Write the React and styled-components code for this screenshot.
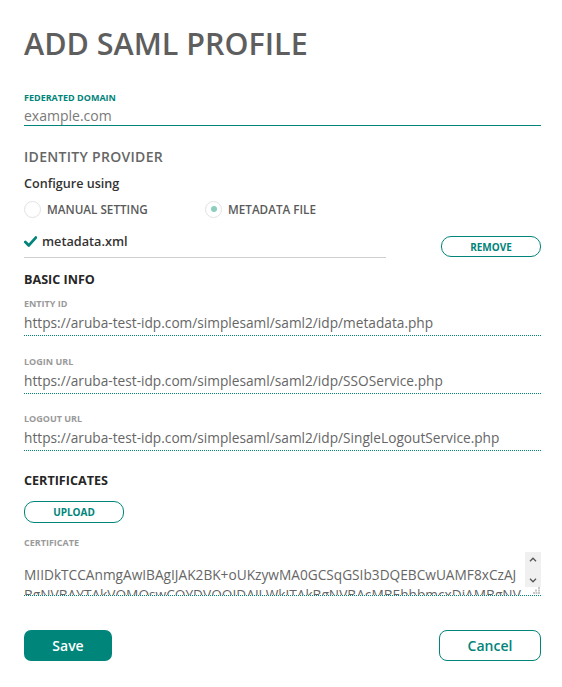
import React from "react";
import styled, { createGlobalStyle } from "styled-components";

const TEAL = "#01847a";

const Global = createGlobalStyle`
  html, body { margin: 0; padding: 0; background: #fff; }
  body { font-family: "Open Sans", "Noto Sans", sans-serif; }
  * { box-sizing: border-box; }
`;

const Page = styled.div`
  width: 562px;
  padding: 23px 21px 24px 24px;
  display: flex;
  flex-direction: column;
`;

const Title = styled.h1`
  margin: 0;
  font-size: 30.5px;
  line-height: 40px;
  font-weight: 600;
  color: #5e5e5e;
`;

const Field = styled.div`
  display: flex;
  flex-direction: column;
  margin-top: ${(p) => p.$mt || 0}px;
`;

const SmallLabel = styled.label`
  font-size: 9px;
  line-height: 12px;
  font-weight: 700;
  color: ${(p) => (p.$accent ? TEAL : "#9a9a9a")};
  text-transform: uppercase;
`;

const TextInput = styled.input`
  border: none;
  outline: none;
  font-family: inherit;
  font-size: 14px;
  line-height: 20px;
  height: 22px;
  padding: 1px 0 0 0;
  color: #7a7a7a;
  border-bottom: 1px solid ${TEAL};
  background: transparent;
`;

const SectionHead = styled.div`
  margin-top: ${(p) => p.$mt || 0}px;
  font-size: 14px;
  line-height: 18px;
  font-weight: 600;
  letter-spacing: 0.3px;
  color: #666;
`;

const GroupHead = styled.div`
  margin-top: ${(p) => p.$mt || 0}px;
  font-size: 12.6px;
  line-height: 18px;
  font-weight: 700;
  color: #262626;
`;

const SubHead = styled.div`
  margin-top: ${(p) => p.$mt || 0}px;
  font-size: 12.6px;
  line-height: 18px;
  font-weight: 600;
  color: #333;
`;

const RadioRow = styled.div`
  display: flex;
  align-items: center;
  margin-top: 7px;
  height: 18px;
`;

const RadioOption = styled.label`
  display: flex;
  align-items: center;
  gap: 6px;
  width: ${(p) => p.$w}px;
  font-size: 11.7px;
  font-weight: 600;
  color: #5a5a5a;
`;

const RadioCircle = styled.span`
  width: 17px;
  height: 17px;
  border-radius: 50%;
  border: 1px solid #e2e2e2;
  background: #fff;
  display: flex;
  align-items: center;
  justify-content: center;
  &::after {
    content: "";
    width: 6px;
    height: 6px;
    border-radius: 50%;
    background: #8ccfbf;
    display: ${(p) => (p.$checked ? "block" : "none")};
  }
`;

const FileRow = styled.div`
  display: flex;
  align-items: flex-end;
  justify-content: space-between;
  margin-top: 13px;
`;

const FileName = styled.div`
  width: 362px;
  height: 27px;
  display: flex;
  align-items: center;
  gap: 5px;
  border-bottom: 1px solid #cfcfcf;
  font-size: 12.7px;
  font-weight: 600;
  color: #333;
  padding-bottom: 6px;
`;

const OutlineBtn = styled.button`
  width: ${(p) => p.$w}px;
  height: ${(p) => p.$h}px;
  margin-top: ${(p) => p.$mt || 0}px;
  margin-bottom: ${(p) => p.$mb || 0}px;
  border: 1px solid ${TEAL};
  border-radius: 10px;
  background: #fff;
  color: ${TEAL};
  font-family: inherit;
  font-size: 10px;
  font-weight: 700;
  padding: 0;
  cursor: pointer;
`;

const ReadValue = styled.div`
  font-size: 13.7px;
  line-height: 20px;
  color: #666;
  padding-top: 3px;
  padding-bottom: 2px;
  border-bottom: 1px dotted ${TEAL};
  white-space: nowrap;
  overflow: hidden;
`;

const CertBox = styled.div`
  margin-top: 3px;
  display: flex;
  height: 44px;
  border-bottom: 1px dotted ${TEAL};
`;

const CertArea = styled.textarea`
  flex: 1;
  min-width: 0;
  height: 100%;
  border: none;
  outline: none;
  resize: none;
  font-family: inherit;
  font-size: 13.7px;
  line-height: 20px;
  color: #666;
  padding: 13px 4px 0 0;
  overflow: hidden;
  word-break: break-all;
`;

const ScrollTrack = styled.div`
  width: 16px;
  display: flex;
  flex-direction: column;
`;

const ScrollBody = styled.div`
  height: 35px;
  background: #f0f0f0;
  display: flex;
  flex-direction: column;
  align-items: center;
  justify-content: space-between;
  padding: 5px 0 4px;
`;

const Resizer = styled.div`
  flex: 1;
  display: flex;
  justify-content: flex-end;
  align-items: flex-end;
  padding: 0 1px 1px 0;
`;

const Footer = styled.div`
  display: flex;
  justify-content: space-between;
  margin-top: 34px;
`;

const PrimaryBtn = styled.button`
  width: 88px;
  height: 31px;
  border: none;
  border-radius: 7px;
  background: #00857a;
  color: #fff;
  font-family: inherit;
  font-size: 14px;
  font-weight: 600;
`;

const SecondaryBtn = styled.button`
  width: 102px;
  height: 31px;
  border: 1px solid ${TEAL};
  border-radius: 8px;
  background: #fff;
  color: ${TEAL};
  font-family: inherit;
  font-size: 14px;
  font-weight: 600;
`;

const Check = () => (
  <svg width="13" height="11" viewBox="0 0 13 11">
    <path d="M1.4 6 L4.8 9.4 L11.8 1.6" fill="none" stroke={TEAL} strokeWidth="2.8" strokeLinecap="round" strokeLinejoin="round" />
  </svg>
);

const Chevron = ({ up }) => (
  <svg width="8" height="5" viewBox="0 0 8 5">
    <path d={up ? "M1 4.2 L4 1.2 L7 4.2" : "M1 0.8 L4 3.8 L7 0.8"} fill="none" stroke="#555" strokeWidth="1.3" />
  </svg>
);

const Grip = () => (
  <svg width="7" height="7" viewBox="0 0 7 7">
    <g fill="#c8c8c8">
      <rect x="5" y="0" width="2" height="2" />
      <rect x="2" y="2.5" width="2" height="2" />
      <rect x="5" y="2.5" width="2" height="2" />
      <rect x="0" y="5" width="2" height="2" />
      <rect x="2.5" y="5" width="2" height="2" />
      <rect x="5" y="5" width="2" height="2" />
    </g>
  </svg>
);

const CERT =
  "MIIDkTCCAnmgAwIBAgIJAK2BK+oUKzywMA0GCSqGSIb3DQEBCwUAMF8xCzAJBgNVBAYTAkVOMQswCQYDVQQIDAJLWkJTAkBgNVBAcMBEhhbmcxDjAMBgNVBAoMBUFydWJhMQ4wDAYDVQQLDAVBcnViYTETMBEGA1UEAwwKYXJ1YmEtdGVzdDAeFw0xODA1MDExMjAwMDBaFw0yODA1MDExMjAwMDBa";

export default function App() {
  return (
    <>
      <Global />
      <Page>
        <Title>ADD SAML PROFILE</Title>
        <Field $mt={29}>
          <SmallLabel $accent>Federated Domain</SmallLabel>
          <TextInput defaultValue="example.com" />
        </Field>
        <SectionHead $mt={22}>IDENTITY PROVIDER</SectionHead>
        <SubHead $mt={9}>Configure using</SubHead>
        <RadioRow>
          <RadioOption $w={181}>
            <RadioCircle />
            MANUAL SETTING
          </RadioOption>
          <RadioOption $w={160}>
            <RadioCircle $checked />
            METADATA FILE
          </RadioOption>
        </RadioRow>
        <FileRow>
          <FileName>
            <Check />
            metadata.xml
          </FileName>
          <OutlineBtn $w={100} $h={21} $mb={1}>REMOVE</OutlineBtn>
        </FileRow>
        <GroupHead $mt={13}>BASIC INFO</GroupHead>
        <Field $mt={9}>
          <SmallLabel>Entity ID</SmallLabel>
          <ReadValue>https://aruba-test-idp.com/simplesaml/saml2/idp/metadata.php</ReadValue>
        </Field>
        <Field $mt={20}>
          <SmallLabel>Login URL</SmallLabel>
          <ReadValue>https://aruba-test-idp.com/simplesaml/saml2/idp/SSOService.php</ReadValue>
        </Field>
        <Field $mt={19}>
          <SmallLabel>Logout URL</SmallLabel>
          <ReadValue>https://aruba-test-idp.com/simplesaml/saml2/idp/SingleLogoutService.php</ReadValue>
        </Field>
        <GroupHead $mt={21}>CERTIFICATES</GroupHead>
        <OutlineBtn $w={100} $h={22} $mt={11}>UPLOAD</OutlineBtn>
        <Field $mt={14}>
          <SmallLabel>Certificate</SmallLabel>
          <CertBox>
            <CertArea readOnly defaultValue={CERT} />
            <ScrollTrack>
              <ScrollBody>
                <Chevron up />
                <Chevron />
              </ScrollBody>
              <Resizer>
                <Grip />
              </Resizer>
            </ScrollTrack>
          </CertBox>
        </Field>
        <Footer>
          <PrimaryBtn>Save</PrimaryBtn>
          <SecondaryBtn>Cancel</SecondaryBtn>
        </Footer>
      </Page>
    </>
  );
}
